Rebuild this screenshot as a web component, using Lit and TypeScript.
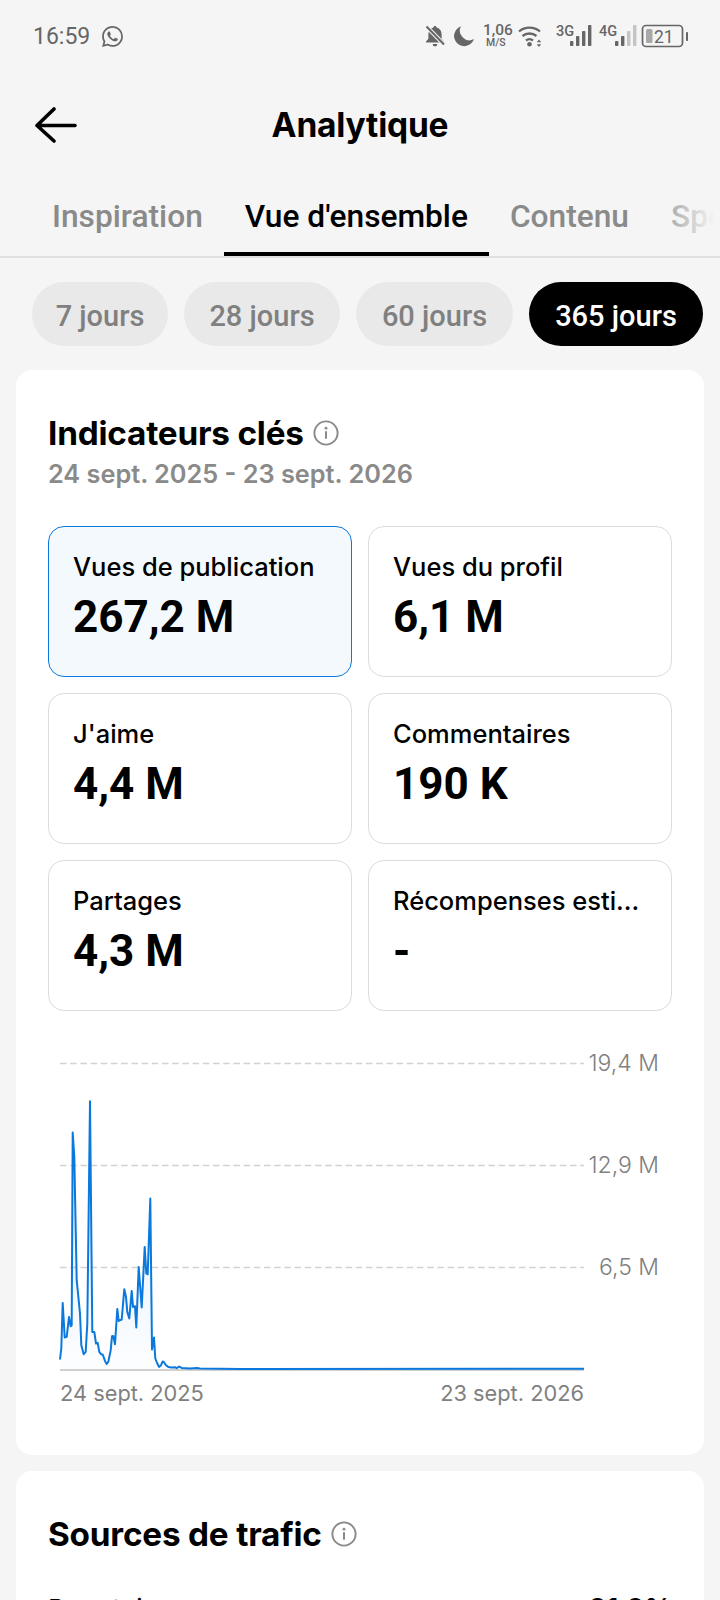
import { LitElement, html, css, svg } from "lit";
import { customElement } from "lit/decorators.js";

const raw: [number, number][] = [[60,928],[64,895],[68,758],[74,862],[80,860],[87,800],[92,828],[95,825],[98,247],[103,320],[110,690],[120,790],[124,885],[131,912],[137,905],[142,820],[150,153],[157,845],[163,845],[168,880],[173,878],[178,905],[183,912],[188,913],[195,932],[200,941],[205,935],[212,900],[216,858],[220,857],[225,882],[232,776],[236,812],[245,808],[253,717],[258,740],[262,785],[268,805],[275,722],[279,770],[285,768],[289,832],[296,650],[305,772],[314,590],[319,670],[323,672],[331,445],[336,898],[342,862],[346,925],[352,940],[357,950],[363,945],[368,934],[372,936],[378,945],[385,950],[395,952],[405,951],[410,954],[418,949],[425,953],[450,955],[470,953],[480,955],[600,956]];
const pts = raw.map(([x, y]) => [40 + x / 3, 1050 + y / 3 - 1040 + 1.2] as [number, number]);
pts.push([584, 329.8]);
const linePts = pts.map((p) => `${p[0].toFixed(1)},${p[1].toFixed(1)}`).join(" ");
const areaPts = `60,330 ${linePts} 584,330`;

const metrics = [
  { label: "Vues de publication", value: "267,2 M", active: true },
  { label: "Vues du profil", value: "6,1 M" },
  { label: "J'aime", value: "4,4 M" },
  { label: "Commentaires", value: "190 K" },
  { label: "Partages", value: "4,3 M" },
  { label: "Récompenses estimées", value: "-" },
];

const infoIcon = html`<svg class="info" viewBox="0 0 26 26" fill="none">
  <circle cx="13" cy="13" r="11.6" stroke="#8a8a8a" stroke-width="1.9"></circle>
  <circle cx="13" cy="8.2" r="1.4" fill="#8a8a8a"></circle>
  <rect x="12" y="11" width="2" height="8" rx="1" fill="#8a8a8a"></rect>
</svg>`;

@customElement("app-root")
export class AppRoot extends LitElement {
  static styles = css`
    :host {
      display: block;
      width: 720px;
      height: 1600px;
      overflow: hidden;
      background: #f5f5f5;
      font-family: Inter, "Noto Sans", sans-serif;
      color: #000;
    }
    .status {
      height: 72px;
      display: flex;
      align-items: center;
      padding: 0 32px 0 33px;
      color: #666;
    }
    .time {
      font: 400 23px Roboto, sans-serif;
      margin-right: 12px;
    }
    .wa { width: 21px; height: 21px; fill: #666; }
    .status-right { margin-left: auto; display: block; width: 272px; height: 30px; }
    .status-right text { font-family: Roboto, sans-serif; fill: #666; }
    .header {
      height: 104px;
      display: flex;
      align-items: center;
      position: relative;
      justify-content: center;
    }
    .back { position: absolute; left: 35px; top: 35px; width: 43px; height: 36px; }
    .title { font-size: 33.5px; font-weight: 700; letter-spacing: -0.2px; margin-top: 2px; }
    .tabs {
      position: relative;
      display: flex;
      height: 82px;
      padding-left: 31px;
      border-bottom: 2px solid #e0e0e0;
      overflow: hidden;
      white-space: nowrap;
      box-sizing: border-box;
    }
    .tab {
      flex: none;
      padding: 23px 21px 0;
      font-family: Roboto, sans-serif;
      font-size: 31.7px;
      line-height: 36px;
      font-weight: 500;
      color: #8a8a8a;
      box-sizing: border-box;
      height: 80px;
    }
    .tab.on { color: #000; border-bottom: 4px solid #000; }
    .fade {
      position: absolute;
      right: 0;
      top: 0;
      bottom: 0;
      width: 52px;
      background: linear-gradient(to right, rgba(245,245,245,0.3), #f5f5f5 90%);
    }
    .chips { display: flex; gap: 16px; padding: 24px 0 0 32px; }
    .chip {
      height: 64px;
      border-radius: 32px;
      background: #e9e9e9;
      color: #808080;
      font-family: Roboto, sans-serif;
      font-size: 29px;
      font-weight: 500;
      padding-top: 3px;
      display: flex;
      align-items: center;
      justify-content: center;
      box-sizing: border-box;
    }
    .chip.on { background: #000; color: #fff; }
    .card {
      background: #fff;
      border-radius: 16px;
      margin: 24px 16px 0;
      padding: 43px 32px 32px;
      box-sizing: border-box;
    }
    .card.main { height: 1085px; }
    .card.next { margin-top: 16px; height: 300px; padding-top: 43px; }
    .h2 { display: flex; align-items: center; gap: 9px; font-size: 33.3px; line-height: 40px; font-weight: 700; letter-spacing: -0.2px; }
    .info { width: 26px; height: 26px; flex: none; }
    .date { font-size: 25.3px; line-height: 36px; font-weight: 600; color: #8a8a8a; margin-top: 3px; }
    .grid { display: grid; grid-template-columns: 304px 304px; gap: 16px; margin-top: 34px; }
    .metric {
      height: 151px;
      border: 1.3px solid #dcdcdc;
      border-radius: 16px;
      padding: 24px 24px 0;
      box-sizing: border-box;
      min-width: 0;
    }
    .metric.on { background: #f4f9fe; border-color: #0a78dc; }
    .label {
      font-size: 25.5px;
      line-height: 32px;
      font-weight: 500;
      white-space: nowrap;
      overflow: hidden;
      text-overflow: ellipsis;
    }
    .value { font-family: Roboto, sans-serif; font-size: 44px; line-height: 56px; font-weight: 700; margin-top: 6px; }
    .chart { display: block; width: 720px; height: 400px; margin: 0 0 0 -48px; }
    .chart-wrap { margin-top: 28px; }
    .chart text { font-family: Inter, sans-serif; font-size: 23px; font-weight: 300; fill: #808080; }
    .chart text.x { font-size: 21.8px; font-weight: 400; }
    .row { display: flex; justify-content: space-between; margin-top: 39px; font-size: 26px; line-height: 32px; }
    .row b { font-weight: 700; font-size: 27px; }
  `;

  private statusIcons() {
    const bars = (x: number, light: number) =>
      [0, 1, 2, 3].map((i) => {
        const h = [5, 10, 15, 21][i];
        return svg`<rect x=${x + i * 6} y=${25 - h} width="3.4" height=${h} rx="0.8" fill=${i >= light ? "#c4c4c4" : "#666"}></rect>`;
      });
    return html`<svg class="status-right" viewBox="0 0 272 30">
      <g transform="translate(10,5)">
        <path d="M9 0c.9 0 1.6.7 1.6 1.5C14 2.3 15.6 5 15.6 8.4v4.4L18 15.6v.9H0v-.9l2.4-2.8V8.4C2.4 5 4 2.3 7.4 1.5 7.4.7 8.1 0 9 0z" fill="#666"></path>
        <path d="M6.6 18h4.8a2.4 2.4 0 0 1-4.8 0z" fill="#666"></path>
        <path d="M0.5 0.5L18 18.5" stroke="#f5f5f5" stroke-width="4"></path>
        <path d="M0.5 0.5L18 18.5" stroke="#666" stroke-width="2"></path>
      </g>
      <path d="M45 5.3A10.2 10.2 0 1 0 58 18 9.500 9.500 0 0 1 45 5.300z" fill="#666"></path>
      <text x="67" y="13.500" font-size="15.500" font-weight="500">1,06</text>
      <text x="70" y="25" font-size="10.500" font-weight="500">M/S</text>
      <g fill="none" stroke="#666" stroke-width="2.3" transform="translate(102,3)">
        <path d="M1 7.5a16 16 0 0 1 21 0"></path>
        <path d="M4.5 12a11 11 0 0 1 14 0"></path>
        <path d="M8 16.5a5.6 5.6 0 0 1 7 0"></path>
      </g>
      <circle cx="113.500" cy="23.300" r="2.300" fill="#666"></circle>
      <path d="M123 18.500l2.200 2.800h-4.400zM123 26l2.200-2.800h-4.400z" fill="#666"></path>
      <text x="140" y="15" font-size="14.500" font-weight="500">3G</text>
      <g transform="translate(154,0)">${bars(0, 4)}</g>
      <text x="183" y="15" font-size="14.500" font-weight="500">4G</text>
      <g transform="translate(199,0)">${bars(0, 2)}</g>
      <rect x="226.500" y="4.500" width="40" height="21" rx="3.500" fill="none" stroke="#666" stroke-width="1.700"></rect>
      <rect x="230" y="8" width="6.500" height="14" rx="1.500" fill="#a8a8a8"></rect>
      <text x="238" y="21.500" font-size="17.500">21</text>
      <rect x="270" y="11" width="2" height="9" rx="0.800" fill="#666"></rect>
    </svg>`;
  }

  private chart() {
    return html`<svg class="chart" viewBox="0 0 720 400">
      <defs>
        <linearGradient id="g" x1="0" y1="0" x2="0" y2="1">
          <stop offset="0" stop-color="#0a78dc" stop-opacity="0.16"></stop>
          <stop offset="1" stop-color="#0a78dc" stop-opacity="0.01"></stop>
        </linearGradient>
      </defs>
      ${[24, 126, 228].map(
        (y) => svg`<line x1="60" x2="584" y1=${y + 0.5} y2=${y + 0.5} stroke="#d2d2d2" stroke-width="1.500" stroke-dasharray="6.500 3.700"></line>`
      )}
      <line x1="60" x2="584" y1="331" y2="331" stroke="#d0d0d0" stroke-width="2"></line>
      <polygon points=${areaPts} fill="url(#g)"></polygon>
      <polyline points=${linePts} fill="none" stroke="#0a78dc" stroke-width="2" stroke-linejoin="round"></polyline>
      <text x="659" y="32" text-anchor="end">19,4 M</text>
      <text x="659" y="134" text-anchor="end">12,9 M</text>
      <text x="659" y="236" text-anchor="end">6,5 M</text>
      <text class="x" x="60" y="362">24 sept. 2025</text>
      <text class="x" x="584" y="362" text-anchor="end">23 sept. 2026</text>
    </svg>`;
  }

  render() {
    const chips = [
      ["7 jours", 136],
      ["28 jours", 156],
      ["60 jours", 157],
      ["365 jours", 174],
    ] as [string, number][];
    return html`
      <div class="status">
        <span class="time">16:59</span>
        <svg class="wa" viewBox="0 0 24 24"><path d="M17.472 14.382c-.297-.149-1.758-.867-2.03-.967-.273-.099-.471-.148-.67.15-.197.297-.767.966-.94 1.164-.173.199-.347.223-.644.075-.297-.15-1.255-.463-2.39-1.475-.883-.788-1.48-1.761-1.653-2.059-.173-.297-.018-.458.13-.606.134-.133.298-.347.446-.52.149-.174.198-.298.298-.497.099-.198.05-.371-.025-.52-.075-.149-.669-1.612-.916-2.207-.242-.579-.487-.5-.669-.51-.173-.008-.371-.01-.57-.01-.198 0-.52.074-.792.372-.272.297-1.04 1.016-1.04 2.479 0 1.462 1.065 2.875 1.213 3.074.149.198 2.096 3.2 5.077 4.487.709.306 1.262.489 1.694.625.712.227 1.36.195 1.871.118.571-.085 1.758-.719 2.006-1.413.248-.694.248-1.289.173-1.413-.074-.124-.272-.198-.57-.347m-5.421 7.403h-.004a9.87 9.87 0 01-5.031-1.378l-.361-.214-3.741.982.998-3.648-.235-.374a9.86 9.86 0 01-1.51-5.26c.001-5.45 4.436-9.884 9.888-9.884 2.64 0 5.122 1.03 6.988 2.898a9.825 9.825 0 012.893 6.994c-.003 5.45-4.437 9.884-9.885 9.884m8.413-18.297A11.815 11.815 0 0012.05 0C5.495 0 .16 5.335.157 11.892c0 2.096.547 4.142 1.588 5.945L.057 24l6.305-1.654a11.882 11.882 0 005.683 1.448h.005c6.554 0 11.89-5.335 11.893-11.893a11.821 11.821 0 00-3.48-8.413z"></path></svg>
        ${this.statusIcons()}
      </div>
      <div class="header">
        <svg class="back" viewBox="0 0 43 36" fill="none" stroke="#000" stroke-width="3.600" stroke-linecap="round" stroke-linejoin="round">
          <path d="M19 2L2 18.500 19 34M2 18.500H40"></path>
        </svg>
        <div class="title">Analytique</div>
      </div>
      <div class="tabs">
        <div class="tab">Inspiration</div>
        <div class="tab on">Vue d'ensemble</div>
        <div class="tab">Contenu</div>
        <div class="tab">Spectateurs</div>
        <div class="fade"></div>
      </div>
      <div class="chips">
        ${chips.map(
          ([t, w], i) => html`<div class="chip ${i === 3 ? "on" : ""}" style="width:${w}px">${t}</div>`
        )}
      </div>
      <section class="card main">
        <div class="h2">Indicateurs clés ${infoIcon}</div>
        <div class="date">24 sept. 2025 - 23 sept. 2026</div>
        <div class="grid">
          ${metrics.map(
            (m) => html`<div class="metric ${m.active ? "on" : ""}">
              <div class="label">${m.label}</div>
              <div class="value">${m.value}</div>
            </div>`
          )}
        </div>
        <div class="chart-wrap">${this.chart()}</div>
      </section>
      <section class="card next">
        <div class="h2">Sources de trafic ${infoIcon}</div>
        <div class="row"><span>Pour toi</span><b>91,0%</b></div>
      </section>
    `;
  }
}
